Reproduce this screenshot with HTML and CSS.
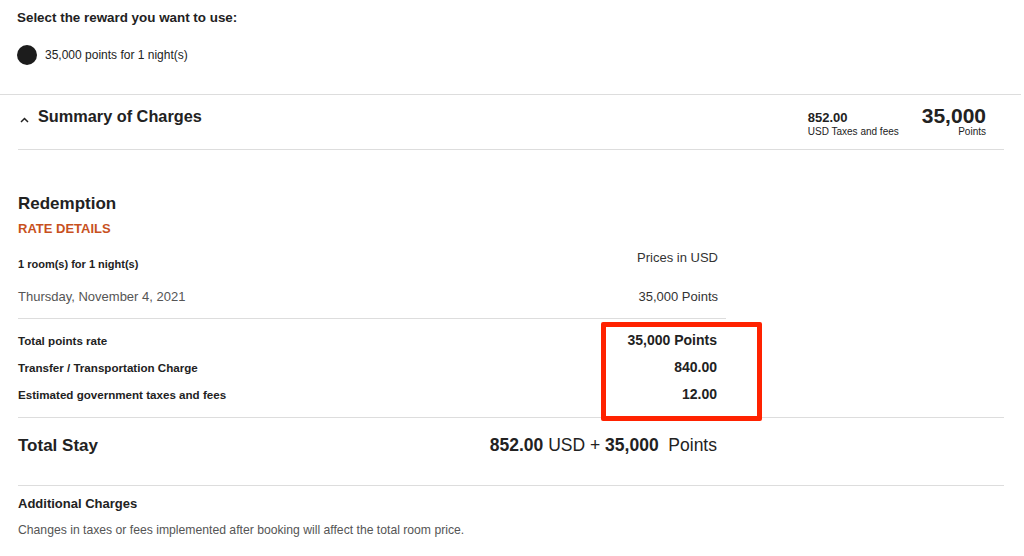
FILE: index.html
```html
<!DOCTYPE html>
<html lang="en">
<head>
    <meta charset="UTF-8">
    <meta name="viewport" content="width=device-width, initial-scale=1.0">
    <title>Summary of Charges</title>
    <link rel="stylesheet" href="styles.css">
</head>
<body>
    <div class="reward">
        <h3 class="reward-title">Select the reward you want to use:</h3>
        <label class="reward-option">
            <span class="radio"></span>
            <span>35,000 points for 1 night(s)</span>
        </label>
    </div>
    <div class="summary">
        <div class="summary-head">
            <div class="summary-title">
                <svg class="caret" width="9" height="6" viewBox="0 0 9 6">
                    <path d="M1 5 L4.5 1.5 L8 5" fill="none" stroke="#222" stroke-width="1.5"/>
                </svg>
                <span>Summary of Charges</span>
            </div>
            <div class="summary-totals">
                <div class="tax">
                    <div class="tax-amount">852.00</div>
                    <div class="tax-label">USD Taxes and fees</div>
                </div>
                <div class="points">
                    <div class="points-amount">35,000</div>
                    <div class="points-label">Points</div>
                </div>
            </div>
        </div>

        <div class="rate">
            <h2 class="rate-name">Redemption</h2>
            <div class="rate-link">RATE DETAILS</div>
            <div class="row row-info">
                <span class="room">1 room(s) for 1 night(s)</span>
                <span class="currency">Prices in USD</span>
            </div>
            <div class="row row-date">
                <span>Thursday, November 4, 2021</span>
                <span>35,000 Points</span>
            </div>
            <div class="charges">
                <div class="charge-labels">
                    <div>Total points rate</div>
                    <div>Transfer / Transportation Charge</div>
                    <div>Estimated government taxes and fees</div>
                </div>
                <div class="charge-values">
                    <div>35,000 Points</div>
                    <div>840.00</div>
                    <div>12.00</div>
                </div>
            </div>
        </div>

        <div class="total">
            <div class="total-inner">
                <span class="total-label">Total Stay</span>
                <span class="total-value"><b>852.00</b> USD + <b>35,000</b>&nbsp; Points</span>
            </div>
        </div>

        <div class="additional">
            <h4>Additional Charges</h4>
            <p>Changes in taxes or fees implemented after booking will affect the total room price.</p>
        </div>
    </div>
</body>
</html>
```

FILE: styles.css
```css
body, html {
    margin: 0;
    padding: 0;
    background: #fff;
    color: #222;
    font-family: "Liberation Sans", Arial, sans-serif;
}
.reward {
    padding: 10px 17px 0;
    height: 84px;
    border-bottom: 1px solid #ddd;
    margin-right: 3px;
}
.reward-title {
    margin: 0;
    font-size: 13.4px;
    font-weight: 700;
    line-height: 16px;
}
.reward-option {
    display: flex;
    align-items: center;
    gap: 8px;
    margin-top: 19px;
    font-size: 12px;
}
.radio {
    width: 20px;
    height: 20px;
    border-radius: 50%;
    background: #1c1c1c;
}
.summary {
    padding: 0 20px 0 18px;
}
.summary-head {
    display: flex;
    justify-content: space-between;
    height: 54px;
    border-bottom: 1px solid #ddd;
}
.summary-title {
    display: flex;
    align-items: center;
    gap: 9px;
    height: 43px;
    font-size: 16.3px;
    font-weight: 700;
}
.caret {
    margin: 6px 0 0 2px;
}
.summary-totals {
    display: flex;
    gap: 23px;
    padding: 10px 18px 0 0;
}
.tax-amount {
    font-size: 13px;
    font-weight: 700;
    line-height: 16px;
    padding-top: 5px;
}
.tax-label, .points-label {
    font-size: 10px;
    line-height: 12px;
}
.points {
    text-align: right;
}
.points-amount {
    font-size: 21px;
    font-weight: 700;
    line-height: 21px;
}
.rate {
    width: 708px;
    padding-top: 43px;
}
.rate-name {
    margin: 0;
    font-size: 17px;
    font-weight: 600;
    line-height: 22px;
}
.rate-link {
    margin-top: 6px;
    font-size: 13px;
    font-weight: 700;
    color: #c8511e;
}
.row {
    display: flex;
    justify-content: space-between;
    padding-right: 8px;
}
.row-info {
    margin-top: 14px;
    align-items: flex-start;
}
.room {
    font-size: 11px;
    font-weight: 700;
    padding-top: 8px;
}
.currency {
    font-size: 13px;
    color: #333;
}
.row-date {
    margin-top: 19px;
    font-size: 13px;
    color: #555;
    padding-bottom: 14px;
    border-bottom: 1px solid #ddd;
}
.row-date span:last-child {
    color: #333;
}
.charges {
    display: flex;
    justify-content: space-between;
    padding: 8px 9px 9px 0;
}
.charge-labels div {
    font-size: 11.6px;
    font-weight: 700;
    line-height: 27px;
}
.charge-values {
    position: relative;
    text-align: right;
    font-size: 14px;
    font-weight: 700;
}
.charge-values div {
    line-height: 27px;
}
.charge-values::after {
    content: "";
    position: absolute;
    left: -27px;
    right: -45px;
    top: -5px;
    bottom: -13px;
    border: 5px solid #ff2200;
    border-radius: 2px;
}
.total {
    border-top: 1px solid #ddd;
    border-bottom: 1px solid #ddd;
    padding: 17px 0 29px;
}
.total-inner {
    display: flex;
    justify-content: space-between;
    align-items: baseline;
    width: 699px;
}
.total-label {
    font-size: 17px;
    font-weight: 700;
}
.total-value {
    font-size: 17.5px;
}
.additional h4 {
    margin: 10px 0 0;
    font-size: 13px;
    font-weight: 700;
}
.additional p {
    margin: 12px 0 0;
    font-size: 12.2px;
    color: #555;
}
```
